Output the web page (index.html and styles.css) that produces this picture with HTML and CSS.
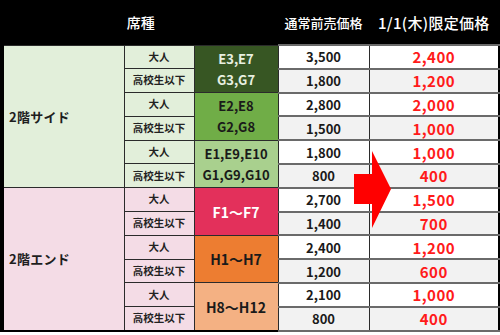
FILE: index.html
```html
<!DOCTYPE html>
<html lang="ja">
<head>
<meta charset="utf-8">
<link rel="stylesheet" href="styles.css">
</head>
<body>
<div class="wrap">
<table class="price">
<colgroup>
<col class="c1"><col class="c2"><col class="c3"><col class="c4"><col class="c5">
</colgroup>
<thead>
<tr>
<th colspan="3" class="h-seat">席種</th>
<th class="h-normal"><span class="hd">通常前売価格</span></th>
<th class="h-special"><span class="hd">1/1(木)限定価格</span></th>
</tr>
</thead>
<tbody>
<tr>
<td rowspan="6" class="area side">2階サイド</td>
<td class="cat side">大人</td>
<td rowspan="2" class="seat s-dg"><div class="two"><span>E3,E7</span><span>G3,G7</span></div></td>
<td class="np w">3,500</td><td class="sp w">2,400</td>
</tr>
<tr><td class="cat side">高校生以下</td><td class="np g">1,800</td><td class="sp g">1,200</td></tr>
<tr>
<td class="cat side">大人</td>
<td rowspan="2" class="seat s-mg"><div class="two"><span>E2,E8</span><span>G2,G8</span></div></td>
<td class="np w">2,800</td><td class="sp w">2,000</td>
</tr>
<tr><td class="cat side">高校生以下</td><td class="np g">1,500</td><td class="sp g">1,000</td></tr>
<tr>
<td class="cat side">大人</td>
<td rowspan="2" class="seat s-lg"><div class="two"><span>E1,E9,E10</span><span>G1,G9,G10</span></div></td>
<td class="np w">1,800</td><td class="sp w">1,000</td>
</tr>
<tr><td class="cat side">高校生以下</td><td class="np g">800</td><td class="sp g">400</td></tr>
<tr>
<td rowspan="6" class="area end">2階エンド</td>
<td class="cat end">大人</td>
<td rowspan="2" class="seat s-red">F1～F7</td>
<td class="np w">2,700</td><td class="sp w">1,500</td>
</tr>
<tr><td class="cat end">高校生以下</td><td class="np g">1,400</td><td class="sp g">700</td></tr>
<tr>
<td class="cat end">大人</td>
<td rowspan="2" class="seat s-or">H1～H7</td>
<td class="np w">2,400</td><td class="sp w">1,200</td>
</tr>
<tr><td class="cat end">高校生以下</td><td class="np g">1,200</td><td class="sp g">600</td></tr>
<tr>
<td class="cat end">大人</td>
<td rowspan="2" class="seat s-pe">H8～H12</td>
<td class="np w">2,100</td><td class="sp w">1,000</td>
</tr>
<tr><td class="cat end">高校生以下</td><td class="np g">800</td><td class="sp g">400</td></tr>
</tbody>
</table>
<svg class="arrow" width="38" height="77" viewBox="0 0 38 77" aria-hidden="true">
<polygon points="0,23 18,23 18,0 37,38 18,77 18,53 0,53" fill="#ff0000"/>
</svg>
</div>
</body>
</html>
```

FILE: styles.css
```css
* { box-sizing: border-box; }
html, body { margin: 0; padding: 0; background: #ffffff; }
body {
  font-family: "Noto Sans CJK JP", "Noto Sans", sans-serif;
  width: 500px;
  height: 335px;
  overflow: hidden;
}
.wrap {
  position: relative;
  width: 497px;
}
.price {
  border-collapse: collapse;
  table-layout: fixed;
  width: 497px;
  border-left: 4px solid #000;
  border-right: 2px solid #000;
  border-bottom: 2px solid #000;
}
.c1 { width: 122px; }
.c2 { width: 70px; }
.c3 { width: 84px; }
.c4 { width: 91px; }
.c5 { width: 130px; }

thead th {
  background: #000;
  color: #fff;
  height: 45px;
  padding: 0;
  font-weight: 500;
  font-size: 13px;
  text-align: center;
  vertical-align: middle;
  border: 0;
}
thead th.h-normal, thead th.h-special { border-left: 1px solid #000; }
.hd {
  display: flex;
  align-items: center;
  justify-content: center;
  height: 40px;
  margin-left: -1px;
  border-left: 1px solid #c8c8c8;
}
thead th.h-special { font-size: 15px; letter-spacing: 0.3px; }
thead th.h-seat { font-size: 14px; }

tbody tr { height: 23.8px; }
tbody td {
  padding: 0;
  text-align: center;
  vertical-align: middle;
  font-weight: 700;
  border: 1px solid #2b2b2b;
  line-height: 1;
}
.area {
  text-align: left;
  padding-left: 5px;
  font-size: 13px;
  color: #1e1e1e;
  letter-spacing: 0.3px;
}
.side { background: #e2efda; }
.end { background: #f4dce6; }
.cat { font-size: 10.5px; color: #222; }

.seat { font-size: 13px; color: #1a1a1a; }
.two { display: flex; flex-direction: column; gap: 8px; align-items: center; }
.s-dg { background: #375623; color: #e8f0e0; }
.s-mg { background: #70ad47; }
.s-lg { background: #a9d08e; }
.s-red { background: #e3305b; color: #ffffff; font-size: 14px; }
.s-or { background: #ed7d31; font-size: 14px; }
.s-pe { background: #f4b183; font-size: 14px; }

.np { font-size: 13px; color: #1a1a1a; }
.sp { font-size: 15px; color: #ff1a1a; letter-spacing: 0.5px; }
.np, .sp { border-top: 2px solid #6a6a6a; border-bottom: 2px solid #6a6a6a; }
.w { background: #ffffff; }
.g { background: #f2f2f2; }

.arrow {
  position: absolute;
  left: 354px;
  top: 151px;
}
```
